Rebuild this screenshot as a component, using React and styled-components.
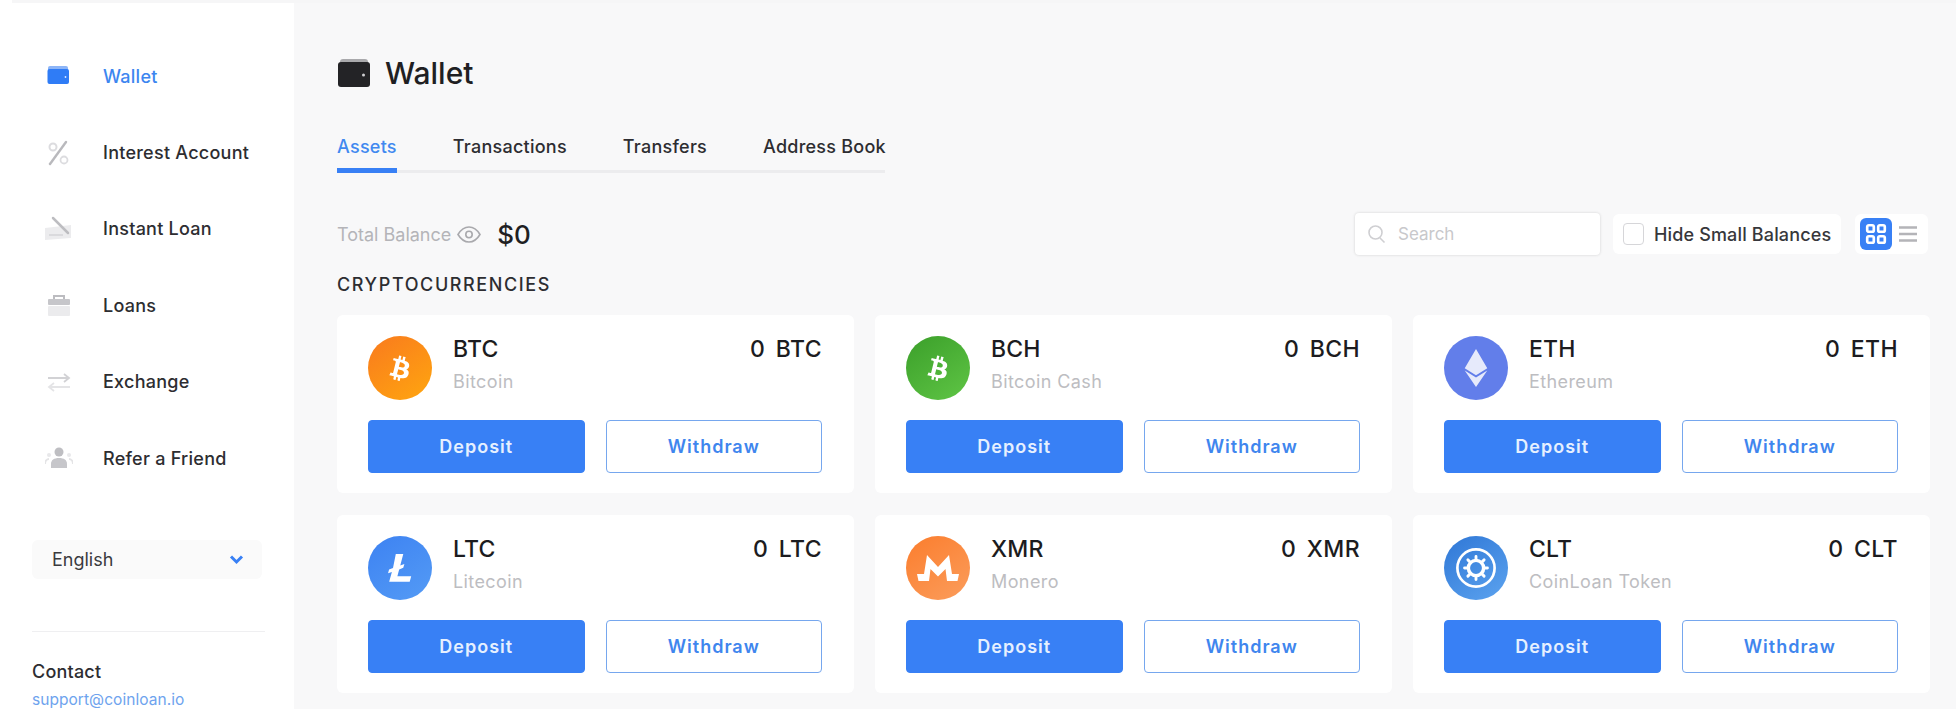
import React from 'react'
import styled, { createGlobalStyle } from 'styled-components'
import { FaBtc, FaEthereum } from 'react-icons/fa'

const GlobalStyle = createGlobalStyle`
  html, body {
    margin: 0;
    padding: 0;
    background: #ffffff;
    font-family: Inter, "Liberation Sans", sans-serif;
    color: #26262a;
  }
  * { box-sizing: border-box; }
`

const Page = styled.div`
  width: 1956px;
  height: 717px;
  overflow: hidden;
  background: #ffffff;
`

const TopStrip = styled.div`
  height: 3px;
  margin-left: 12px;
  background: #f6f6f7;
`

const Shell = styled.div`
  display: flex;
  height: 706px;
`

const Sidebar = styled.aside`
  width: 294px;
  flex: none;
  padding: 35px 29px 0 32px;
  background: #ffffff;
`

const Nav = styled.nav`
  display: flex;
  flex-direction: column;
`

const NavItem = styled.div`
  display: flex;
  align-items: center;
  height: 76.4px;
  padding-left: 13px;
  font-size: 18px;
  font-weight: 500;
  letter-spacing: 0.25px;
  color: ${p => (p.$active ? '#3c86f0' : '#2d2d31')};
`

const NavIcon = styled.svg`
  width: 28px;
  height: 28px;
  flex: none;
  margin-right: 30px;
`

const LangSelect = styled.div`
  display: flex;
  align-items: center;
  justify-content: space-between;
  height: 39px;
  margin: 44px 3px 0 0;
  padding: 0 18px 0 20px;
  border-radius: 6px;
  background: #fafafa;
  font-size: 18px;
  color: #3a3a3e;
`

const Chevron = styled.svg`
  width: 15px;
  height: 11px;
`

const Divider = styled.div`
  height: 1px;
  margin-top: 52px;
  background: #efeff1;
`

const ContactTitle = styled.div`
  margin-top: 29px;
  font-size: 18px;
  font-weight: 500;
  line-height: 22px;
  letter-spacing: 0.2px;
  color: #2d2d31;
`

const ContactMail = styled.div`
  margin-top: 7px;
  font-size: 15.5px;
  line-height: 20px;
  letter-spacing: 0.05px;
  color: #6ea3ee;
`

const Main = styled.main`
  flex: 1;
  min-width: 0;
  padding: 52px 28px 0 43px;
  background: #f8f8f9;
`

const TitleRow = styled.div`
  display: flex;
  align-items: center;
  gap: 15px;
  height: 36px;
`

const TitleIcon = styled.svg`
  width: 33px;
  height: 30px;
  flex: none;
`

const Title = styled.h1`
  margin: 0;
  font-size: 30px;
  font-weight: 500;
  color: #1f1f23;
`

const Tabs = styled.div`
  display: flex;
  gap: 56px;
  width: 548px;
  margin-top: 43px;
  border-bottom: 3px solid #ececee;
`

const Tab = styled.div`
  height: 39px;
  flex: none;
  margin-bottom: -3px;
  border-bottom: 5px solid ${p => (p.$active ? '#3880f5' : 'transparent')};
  font-size: 18px;
  font-weight: 500;
  line-height: 24px;
  letter-spacing: 0.25px;
  white-space: nowrap;
  padding-top: 1px;
  color: ${p => (p.$active ? '#4189f0' : '#2d2d31')};
`

const Toolbar = styled.div`
  display: flex;
  align-items: center;
  height: 42px;
  margin-top: 40px;
`

const BalanceLabel = styled.span`
  font-size: 18px;
  color: #b4b4b8;
`

const EyeIcon = styled.svg`
  width: 24px;
  height: 17px;
  margin-left: 6px;
`

const BalanceValue = styled.span`
  margin-left: 16px;
  font-size: 26px;
  font-weight: 500;
  color: #1f1f23;
`

const SearchBox = styled.div`
  display: flex;
  align-items: center;
  width: 245px;
  height: 42px;
  margin-left: auto;
  padding-left: 12px;
  border-radius: 4px;
  background: #ffffff;
  box-shadow: 0 0 3px rgba(0, 0, 0, 0.16);
  font-size: 17px;
  color: #c8c8cb;
`

const SearchIcon = styled.svg`
  width: 19px;
  height: 20px;
  margin-right: 12px;
`

const HideBox = styled.label`
  display: flex;
  align-items: center;
  width: 228px;
  height: 40px;
  margin-left: 13px;
  padding-left: 10px;
  border-radius: 6px;
  background: #ffffff;
  font-size: 18px;
  font-weight: 500;
  letter-spacing: 0.15px;
  white-space: nowrap;
  color: #37373b;
`

const Check = styled.span`
  width: 21px;
  height: 22px;
  flex: none;
  margin-right: 10px;
  border: 1.5px solid #d6d6d9;
  border-radius: 4px;
`

const ViewToggle = styled.div`
  display: flex;
  align-items: center;
  width: 73px;
  height: 40px;
  margin-left: 14px;
  padding-left: 5px;
  border-radius: 6px;
  background: #ffffff;
`

const GridButton = styled.span`
  display: flex;
  align-items: center;
  justify-content: center;
  width: 32px;
  height: 32px;
  border-radius: 6px;
  background: #3880f5;
`

const ToggleIcon = styled.svg`
  width: 22px;
  height: 22px;
`

const ListIcon = styled.svg`
  width: 20px;
  height: 18px;
  margin-left: 6px;
`

const SectionTitle = styled.h2`
  margin: 18px 0 0;
  font-size: 18px;
  font-weight: 500;
  line-height: 24px;
  letter-spacing: 1.6px;
  color: #2d2d31;
`

const CardGrid = styled.div`
  display: grid;
  grid-template-columns: repeat(3, 517px);
  column-gap: 21px;
  row-gap: 22px;
  margin-top: 18px;
`

const Card = styled.article`
  height: 178px;
  padding: 21px 32px 0 31px;
  border-radius: 6px;
  background: #ffffff;
`

const CardHead = styled.div`
  display: flex;
  height: 65px;
`

const CoinBadge = styled.div`
  display: flex;
  align-items: center;
  justify-content: center;
  width: 64px;
  height: 64px;
  flex: none;
  border-radius: 50%;
  background: ${p => p.$bg};
  color: #ffffff;
`

const BtcGlyph = styled(FaBtc)`
  font-size: 25px;
  transform: rotate(14deg);
`

const EthGlyph = styled(FaEthereum)`
  font-size: 38px;
  color: #e6eafb;
`

const CoinText = styled.div`
  display: flex;
  flex-direction: column;
  margin-left: 21px;
`

const Ticker = styled.div`
  font-size: 23px;
  font-weight: 500;
  line-height: 26px;
  letter-spacing: 0.2px;
  color: #1c1c20;
`

const CoinName = styled.div`
  margin-top: 9px;
  font-size: 18px;
  line-height: 22px;
  letter-spacing: 0.4px;
  color: #bdbdc1;
`

const Amount = styled.div`
  margin-left: auto;
  font-size: 23px;
  font-weight: 500;
  line-height: 26px;
  word-spacing: 4px;
  letter-spacing: 0.4px;
  color: #1c1c20;
`

const Actions = styled.div`
  display: grid;
  grid-template-columns: 1fr 1fr;
  column-gap: 21px;
  margin-top: 19px;
`

const ActionButton = styled.button`
  height: 53px;
  padding: 0;
  border: 1.5px solid ${p => (p.$outline ? '#76a7ee' : '#3880f5')};
  border-radius: 4px;
  background: ${p => (p.$outline ? '#ffffff' : '#3880f5')};
  color: ${p => (p.$outline ? '#3f86ee' : '#e6f0ff')};
  font-family: inherit;
  font-size: 18px;
  font-weight: 600;
  letter-spacing: 1px;
`

const LtcGlyph = () => (
  <svg width="28" height="32" viewBox="0 0 30 34">
    <path fill="#fff" d="M10.500 2h8l-3.200 12.200 4.400-1.600-1.200 4.200-4.400 1.700-1.900 7.300H27l-1.600 6H3.400l2.900-10.600-4.100 1.500 1.100-4.100 4.200-1.600z" />
  </svg>
)

const XmrGlyph = () => (
  <svg width="42" height="28" viewBox="0 0 42 28">
    <path fill="#fff" d="M10 1l11 12L32 1l3 19h7l-1.500 7H30l-1.500-12-7.500 7.500-7.500-7.500L12 27H1.500L0 20h7z" />
  </svg>
)

const CltGlyph = () => (
  <svg width="42" height="42" viewBox="0 0 44 44" fill="none" stroke="#fff">
    <circle cx="22" cy="22" r="19.500" strokeWidth="2.800" />
    <circle cx="22" cy="22" r="8" strokeWidth="3.600" />
    <path strokeWidth="3" strokeLinecap="round" d="M22 10v4M22 30v4M10 22h4M30 22h4M13.500 13.500l3 3M27.500 27.500l3 3M30.500 13.500l-3 3M16.500 27.500l-3 3" />
  </svg>
)

const coins = [
  { ticker: 'BTC', name: 'Bitcoin', bg: 'linear-gradient(145deg, #f97a1e, #ffa60f)', glyph: <BtcGlyph /> },
  { ticker: 'BCH', name: 'Bitcoin Cash', bg: 'linear-gradient(145deg, #3b9f2a, #5fc545)', glyph: <BtcGlyph /> },
  { ticker: 'ETH', name: 'Ethereum', bg: '#627eea', glyph: <EthGlyph /> },
  { ticker: 'LTC', name: 'Litecoin', bg: 'linear-gradient(145deg, #3d82f2, #549bf5)', glyph: <LtcGlyph /> },
  { ticker: 'XMR', name: 'Monero', bg: 'linear-gradient(145deg, #fb7d2d, #fb9d5c)', glyph: <XmrGlyph /> },
  { ticker: 'CLT', name: 'CoinLoan Token', bg: 'linear-gradient(145deg, #2f77d6, #5ca3ef)', glyph: <CltGlyph /> },
]

const tabs = ['Assets', 'Transactions', 'Transfers', 'Address Book']

const navItems = [
  {
    label: 'Wallet',
    active: true,
    icon: (
      <>
        <rect x="3" y="4" width="20" height="6" rx="2" fill="#8db5f7" />
        <rect x="2.500" y="7" width="21.500" height="15" rx="2" fill="#2f7cf6" />
        <circle cx="20.500" cy="15" r="0.900" fill="#dbe8ff" />
      </>
    ),
  },
  {
    label: 'Interest Account',
    icon: (
      <>
        <path d="M21 3L5 25" stroke="#b9b9bd" strokeWidth="2.400" strokeLinecap="round" />
        <circle cx="8" cy="8" r="3.500" fill="none" stroke="#dcdcdf" strokeWidth="2" />
        <circle cx="19" cy="21" r="3.500" fill="none" stroke="#dcdcdf" strokeWidth="1.800" />
      </>
    ),
  },
  {
    label: 'Instant Loan',
    icon: (
      <>
        <path d="M0 13l26-3v13L0 25z" fill="#ececee" />
        <path d="M8 3l15 15" stroke="#bdbdc1" strokeWidth="2.500" strokeLinecap="round" />
        <path d="M4 20h14" stroke="#d4d4d7" strokeWidth="1.500" />
      </>
    ),
  },
  {
    label: 'Loans',
    icon: (
      <>
        <path d="M9 8V5h10v3" fill="none" stroke="#bcbcc0" strokeWidth="2" />
        <rect x="3" y="8" width="22" height="6" rx="1" fill="#c6c6ca" />
        <rect x="3" y="15" width="22" height="10" rx="1" fill="#ebebed" />
      </>
    ),
  },
  {
    label: 'Exchange',
    icon: (
      <>
        <path d="M3 10h21M19 6l5 4-5 4" fill="none" stroke="#d2d2d5" strokeWidth="1.800" />
        <path d="M25 19H4M9 15l-5 4 5 4" fill="none" stroke="#e4e4e6" strokeWidth="1.800" />
      </>
    ),
  },
  {
    label: 'Refer a Friend',
    icon: (
      <>
        <circle cx="14" cy="8" r="4.500" fill="#bebec2" />
        <path d="M6 24v-4c0-4 3-6 8-6s8 2 8 6v4z" fill="#c6c6ca" />
        <circle cx="4" cy="11" r="2" fill="#e8e8ea" />
        <circle cx="24" cy="11" r="2" fill="#e8e8ea" />
        <path d="M0 20c0-3 2-5 4-5M28 20c0-3-2-5-4-5" stroke="#e4e4e6" strokeWidth="2" fill="none" />
      </>
    ),
  },
]

function CoinCard({ ticker, name, bg, glyph }) {
  return (
    <Card>
      <CardHead>
        <CoinBadge $bg={bg}>{glyph}</CoinBadge>
        <CoinText>
          <Ticker>{ticker}</Ticker>
          <CoinName>{name}</CoinName>
        </CoinText>
        <Amount>0 {ticker}</Amount>
      </CardHead>
      <Actions>
        <ActionButton>Deposit</ActionButton>
        <ActionButton $outline>Withdraw</ActionButton>
      </Actions>
    </Card>
  )
}

export default function App() {
  return (
    <Page>
      <GlobalStyle />
      <TopStrip />
      <Shell>
        <Sidebar>
          <Nav>
            {navItems.map(item => (
              <NavItem key={item.label} $active={item.active}>
                <NavIcon viewBox="0 0 28 28">{item.icon}</NavIcon>
                {item.label}
              </NavItem>
            ))}
          </Nav>
          <LangSelect>
            English
            <Chevron viewBox="0 0 15 11">
              <path d="M2 2.500l5.500 5.500L13 2.500" fill="none" stroke="#3880f5" strokeWidth="3" />
            </Chevron>
          </LangSelect>
          <Divider />
          <ContactTitle>Contact</ContactTitle>
          <ContactMail>support@coinloan.io</ContactMail>
        </Sidebar>
        <Main>
          <TitleRow>
            <TitleIcon viewBox="0 0 33 30">
              <path d="M3 4c0-2 1-3 3-3h22c2 0 3 1 3 3v2H3z" fill="#a9a9ac" />
              <rect x="1" y="4" width="32" height="25" rx="3" fill="#232326" />
              <circle cx="26.500" cy="17" r="1.500" fill="#cfcfd2" />
            </TitleIcon>
            <Title>Wallet</Title>
          </TitleRow>
          <Tabs>
            {tabs.map((tab, i) => (
              <Tab key={tab} $active={i === 0}>{tab}</Tab>
            ))}
          </Tabs>
          <Toolbar>
            <BalanceLabel>Total Balance</BalanceLabel>
            <EyeIcon viewBox="0 0 24 17" fill="none" stroke="#a9a9ad" strokeWidth="1.600">
              <path d="M1 8.500C4 3.500 8 1 12 1s8 2.500 11 7.500c-3 5-7 7.500-11 7.500S4 13.500 1 8.500z" />
              <circle cx="12" cy="8.500" r="3.200" />
            </EyeIcon>
            <BalanceValue>$0</BalanceValue>
            <SearchBox>
              <SearchIcon viewBox="0 0 19 20" fill="none" stroke="#cfcfd2" strokeWidth="1.600">
                <circle cx="8.500" cy="8.500" r="6.500" />
                <path d="M13 14l4.500 4.500" />
              </SearchIcon>
              Search
            </SearchBox>
            <HideBox>
              <Check />
              Hide Small Balances
            </HideBox>
            <ViewToggle>
              <GridButton>
                <ToggleIcon viewBox="0 0 20 20" fill="none" stroke="#fff" strokeWidth="2.400">
                  <rect x="2" y="2" width="6" height="6" rx="1.500" />
                  <rect x="12" y="2" width="6" height="6" rx="1.500" />
                  <rect x="2" y="12" width="6" height="6" rx="1.500" />
                  <rect x="12" y="12" width="6" height="6" rx="1.500" />
                </ToggleIcon>
              </GridButton>
              <ListIcon viewBox="0 0 20 18" stroke="#b4b4b8" strokeWidth="2.400">
                <path d="M1 2.500h18M1 9h18M1 15.500h18" />
              </ListIcon>
            </ViewToggle>
          </Toolbar>
          <SectionTitle>CRYPTOCURRENCIES</SectionTitle>
          <CardGrid>
            {coins.map(coin => (
              <CoinCard key={coin.ticker} {...coin} />
            ))}
          </CardGrid>
        </Main>
      </Shell>
    </Page>
  )
}
